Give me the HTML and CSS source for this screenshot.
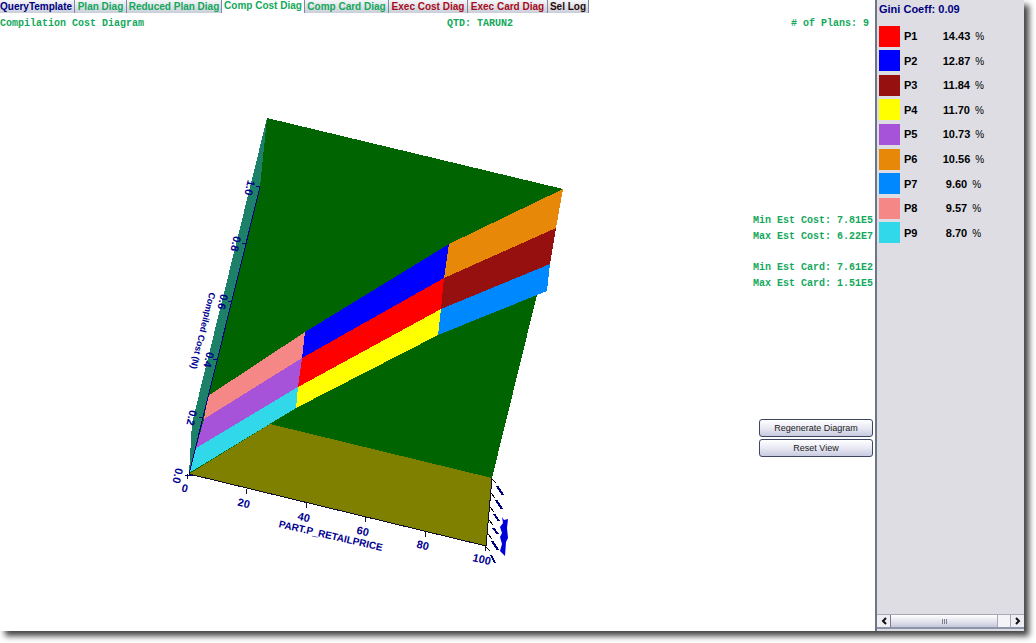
FILE: index.html
```html
<!DOCTYPE html>
<html lang="en">
<head>
<meta charset="utf-8">
<title>Compilation Cost Diagram</title>
<link rel="stylesheet" href="styles.css">
</head>
<body>
<div class="window">
  <main class="main">
    <nav class="tabs" role="tablist">
      <button class="tab tab-navy tab-first" role="tab">QueryTemplate</button>
      <button class="tab tab-green" role="tab">Plan Diag</button>
      <button class="tab tab-green" role="tab">Reduced Plan Diag</button>
      <button class="tab tab-green tab-selected" role="tab" aria-selected="true">Comp Cost Diag</button>
      <button class="tab tab-green" role="tab">Comp Card Diag</button>
      <button class="tab tab-red" role="tab">Exec Cost Diag</button>
      <button class="tab tab-red" role="tab">Exec Card Diag</button>
      <button class="tab tab-dark" role="tab">Sel Log</button>
    </nav>
    <header class="heading">
      <span class="heading-title">Compilation Cost Diagram</span>
      <span>QTD: TARUN2</span>
      <span># of Plans: 9</span>
    </header>
    <div class="stage">
      <div class="plot">
        <svg class="chart" width="420" height="480" viewBox="160 100 420 480" role="img" aria-label="Compiled cost surface">
          <g shape-rendering="crispEdges">
            <polygon fill="#1d8069" points="267,118 192,423 189,474 260,187"/>
            <polygon fill="#006400" points="267,118 563,189 492,478 270,424 189,474 208,396 260,187"/>
            <polygon fill="#808000" points="189,474 270,424 492,478 486,546"/>
            <polygon fill="#f58786" points="208,396 305,332 302,358 204,419"/>
            <polygon fill="#a653d9" points="204,419 302,358 298,387 196,448"/>
            <polygon fill="#30d8ea" points="196,448 298,387 296,408 189,473"/>
            <polygon fill="#0000ff" points="305,332 449,244 444,278 302,358"/>
            <polygon fill="#ff0000" points="302,358 444,278 441,309 298,387"/>
            <polygon fill="#ffff00" points="298,387 441,309 438,335 296,408"/>
            <polygon fill="#e88809" points="449,244 563,189 556,228 444,278"/>
            <polygon fill="#961010" points="444,278 556,228 550,264 441,309"/>
            <polygon fill="#0088ff" points="441,309 550,264 547,291 438,335"/>
            <path class="axis-z" d="M260 187 189 474M256 186h4M242 243h4M228 301h4M213 359h4M199 417h4M185 475h8"/>
            <path class="axis" d="M189 474 486 546 492 478M188 474l-1 5M247 489l-1 5M307 503l-1 5M366 517l-1 5M426 532l-1 5M486 546l-1 5"/>
            <path class="axis-y" d="M492 479l4 4M491 493l4 5M490 507l4 5M489 520l4 5M488 534l4 5M486 547l4 4"/>
            <path class="edge-label" d="M497 486l6 9M496 500l6 9M494 514l5 7M493 528l5 6M492 541l6 9M491 555l4 8"/>
          </g>
          <path fill="#0000d8" d="M502 517l2 3 4-1-1 9 1 10-2 4-1 14-5-5 2-7-2-7 2-4-2-6 3-4z"/>
          <g class="axis-text">
            <text transform="translate(246 187) rotate(103)">1.0</text>
            <text transform="translate(232 243) rotate(103)">0.8</text>
            <text transform="translate(219 301) rotate(103)">0.6</text>
            <text transform="translate(205 359) rotate(103)">0.4</text>
            <text transform="translate(188 417) rotate(103)">0.2</text>
            <text transform="translate(174 475) rotate(103)">0.0</text>
            <text class="title-z" transform="translate(200 330) rotate(104)">Compiled Cost (N)</text>
            <text transform="translate(184 492) rotate(13)">0</text>
            <text transform="translate(243 507) rotate(13)">20</text>
            <text transform="translate(303 521) rotate(13)">40</text>
            <text transform="translate(362 535) rotate(13)">60</text>
            <text transform="translate(422 549) rotate(13)">80</text>
            <text transform="translate(481 563) rotate(13)">100</text>
            <text class="title-x" transform="translate(330 539) rotate(13)">PART.P_RETAILPRICE</text>
          </g>
        </svg>
      </div>
      <div class="controls">
        <div class="stats">
          <p>Min Est Cost: 7.81E5</p>
          <p>Max Est Cost: 6.22E7</p>
        </div>
        <div class="stats">
          <p>Min Est Card: 7.61E2</p>
          <p>Max Est Card: 1.51E5</p>
        </div>
        <div class="actions">
          <button class="btn">Regenerate Diagram</button>
          <button class="btn">Reset View</button>
        </div>
      </div>
    </div>
  </main>
  <aside class="side">
    <h2 class="gini">Gini Coeff: 0.09</h2>
    <table class="legend">
      <tbody>
        <tr><td><span class="swatch p1"></span></td><th scope="row">P1</th><td class="share">14.43 <span>%</span></td></tr>
        <tr><td><span class="swatch p2"></span></td><th scope="row">P2</th><td class="share">12.87 <span>%</span></td></tr>
        <tr><td><span class="swatch p3"></span></td><th scope="row">P3</th><td class="share">11.84 <span>%</span></td></tr>
        <tr><td><span class="swatch p4"></span></td><th scope="row">P4</th><td class="share">11.70 <span>%</span></td></tr>
        <tr><td><span class="swatch p5"></span></td><th scope="row">P5</th><td class="share">10.73 <span>%</span></td></tr>
        <tr><td><span class="swatch p6"></span></td><th scope="row">P6</th><td class="share">10.56 <span>%</span></td></tr>
        <tr><td><span class="swatch p7"></span></td><th scope="row">P7</th><td class="share">9.60 <span>%</span></td></tr>
        <tr><td><span class="swatch p8"></span></td><th scope="row">P8</th><td class="share">9.57 <span>%</span></td></tr>
        <tr><td><span class="swatch p9"></span></td><th scope="row">P9</th><td class="share">8.70 <span>%</span></td></tr>
      </tbody>
    </table>
    <div class="scrollbar">
      <button class="arrow" aria-label="Scroll left"><svg width="6" height="8" viewBox="0 0 6 8"><path d="M5 1 2 4l3 3"/></svg></button>
      <div class="track"><div class="thumb"><svg width="7" height="5" viewBox="0 0 7 5" shape-rendering="crispEdges"><path d="M1 0v5M3 0v5M5 0v5"/></svg></div></div>
      <button class="arrow" aria-label="Scroll right"><svg width="6" height="8" viewBox="0 0 6 8"><path d="M1 1l3 3-3 3"/></svg></button>
    </div>
  </aside>
</div>
</body>
</html>
```
FILE: styles.css
```css
* { box-sizing: border-box; }

body {
  margin: 0;
  height: 100vh;
  padding: 0 12px 12px 0;
  background: #fff;
  font-family: "Liberation Sans", Arial, sans-serif;
  font-size: 11px;
  overflow: hidden;
}

button { margin: 0; padding: 0; font: inherit; }
p, h2 { margin: 0; }

.window {
  display: flex;
  height: 100%;
  background: #fff;
  box-shadow: 5px 5px 6px 0 #444;
}

.main {
  flex: 1;
  min-width: 0;
  display: flex;
  flex-direction: column;
}

.tabs {
  display: grid;
  grid-template-columns: 75px 52px 95px 83px 84px 79px 80px 41px;
  height: 13px;
}
.tab {
  display: flex;
  align-items: center;
  justify-content: center;
  height: 13px;
  border: 0;
  border-right: 1px solid #7d8aa0;
  background: linear-gradient(#f6f7fa, #c9ced9);
  font-size: 10px;
  font-weight: bold;
  line-height: 13px;
  white-space: nowrap;
}
.tab-first { justify-content: flex-start; }
.tab-selected { background: #fff; padding-bottom: 2px; }
.tab-navy { color: #000080; }
.tab-green { color: #14a85c; }
.tab-red { color: #a80c1c; }
.tab-dark { color: #2a0808; }

.heading, .stats {
  font-family: "Liberation Mono", "Courier New", monospace;
  font-size: 10px;
  font-weight: bold;
  color: #14a85c;
  white-space: nowrap;
}
.heading {
  display: grid;
  grid-template-columns: 447fr 344fr auto;
  padding: 1px 6px 0 0;
  line-height: 20px;
}

.stage { flex: 1; display: flex; min-height: 0; }
.plot { flex: 1; min-width: 0; padding: 66px 0 0 160px; }
.chart { display: block; }
.axis { fill: none; stroke: #101030; stroke-width: 1; }
.axis-z { fill: none; stroke: #000080; stroke-width: 1; }
.axis-y { fill: none; stroke: #000; stroke-width: 1; }
.edge-label { fill: none; stroke: #00007a; stroke-width: 2; }
.axis-text {
  fill: #000090;
  font-size: 11px;
  font-weight: bold;
  text-anchor: middle;
}
.title-z { font-size: 9px; }
.title-x { font-size: 10px; }

.controls {
  display: flex;
  flex-direction: column;
  align-items: flex-end;
  gap: 15px;
  padding: 179px 2px 0 0;
}
.stats { line-height: 16px; }
.actions {
  display: flex;
  flex-direction: column;
  gap: 2px;
  width: 114px;
  margin-top: 112px;
}
.btn {
  height: 18px;
  border: 1px solid #3d4760;
  border-radius: 3px;
  background: linear-gradient(#fff, #e8e9f3 50%, #c8cbe0);
  color: #222;
  font-size: 9px;
  line-height: 16px;
}

.side {
  width: 149px;
  display: flex;
  flex-direction: column;
  border-left: 2px solid #6c7686;
  background: #dedde3;
}
.gini {
  padding-left: 2px;
  color: #000080;
  font-size: 11px;
  line-height: 18px;
}
.legend {
  width: 112px;
  height: 221px;
  margin: 6px 0 0 2px;
  border-collapse: collapse;
  font-weight: bold;
  color: #000;
}
.legend td, .legend th { padding: 0; vertical-align: middle; }
.legend th { width: 36px; padding-left: 4px; text-align: left; }
.legend td:first-child { width: 21px; }
.share { text-align: center; white-space: nowrap; }
.share span { margin-left: 2px; font-weight: normal; font-size: 10px; }
.swatch { display: block; width: 21px; height: 21px; }
.p1 { background: #ff0000; }
.p2 { background: #0000ff; }
.p3 { background: #961010; }
.p4 { background: #ffff00; }
.p5 { background: #a653d9; }
.p6 { background: #e88809; }
.p7 { background: #0088ff; }
.p8 { background: #f58786; }
.p9 { background: #30d8ea; }

.scrollbar {
  display: flex;
  height: 15px;
  margin-top: auto;
  margin-bottom: 2px;
  border-top: 1px solid #a6a9b4;
  border-bottom: 2px solid #8b94a8;
  background: #f4f4f8;
}
.arrow {
  display: flex;
  align-items: center;
  justify-content: center;
  width: 13px;
  border: 0;
  background: #eeeef4;
}
.arrow path { fill: none; stroke: #111; stroke-width: 2; }
.track {
  flex: 1;
  display: flex;
  border-left: 1px solid #777d8c;
  border-right: 1px solid #a6a9b4;
}
.thumb {
  display: flex;
  align-items: center;
  justify-content: center;
  width: 90%;
  border-right: 1px solid #a6a9b4;
  background: linear-gradient(#fff, #dfe0ea 60%, #c4c7d8);
}
.thumb path { stroke: #7b8194; stroke-width: 1; }
```
